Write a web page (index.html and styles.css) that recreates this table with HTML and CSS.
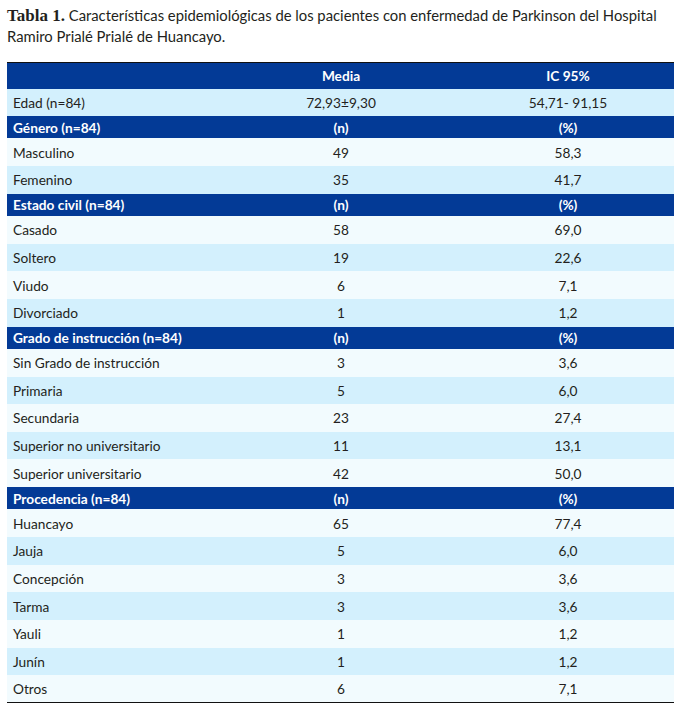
FILE: index.html
```html
<!DOCTYPE html>
<html lang="es">
<head>
<meta charset="utf-8">
<title>Tabla 1</title>
<link rel="stylesheet" href="styles.css">
</head>
<body>
<div class="page">
  <p class="caption"><b class="caption-label">Tabla 1.</b> Características epidemiológicas de los pacientes con enfermedad de Parkinson del Hospital Ramiro Prialé Prialé de Huancayo.</p>
  <table class="data">
    <colgroup>
      <col class="c1"><col class="c2"><col class="c3">
    </colgroup>
    <thead>
      <tr class="head"><th></th><th>Media</th><th>IC 95%</th></tr>
    </thead>
    <tbody>
      <tr class="row alt"><td>Edad (n=84)</td><td>72,93±9,30</td><td>54,71- 91,15</td></tr>
      <tr class="section"><th>Género (n=84)</th><th>(n)</th><th>(%)</th></tr>
      <tr class="row"><td>Masculino</td><td>49</td><td>58,3</td></tr>
      <tr class="row alt"><td>Femenino</td><td>35</td><td>41,7</td></tr>
      <tr class="section"><th>Estado civil (n=84)</th><th>(n)</th><th>(%)</th></tr>
      <tr class="row"><td>Casado</td><td>58</td><td>69,0</td></tr>
      <tr class="row alt"><td>Soltero</td><td>19</td><td>22,6</td></tr>
      <tr class="row"><td>Viudo</td><td>6</td><td>7,1</td></tr>
      <tr class="row alt"><td>Divorciado</td><td>1</td><td>1,2</td></tr>
      <tr class="section"><th>Grado de instrucción (n=84)</th><th>(n)</th><th>(%)</th></tr>
      <tr class="row"><td>Sin Grado de instrucción</td><td>3</td><td>3,6</td></tr>
      <tr class="row alt"><td>Primaria</td><td>5</td><td>6,0</td></tr>
      <tr class="row"><td>Secundaria</td><td>23</td><td>27,4</td></tr>
      <tr class="row alt"><td>Superior no universitario</td><td>11</td><td>13,1</td></tr>
      <tr class="row"><td>Superior universitario</td><td>42</td><td>50,0</td></tr>
      <tr class="section"><th>Procedencia (n=84)</th><th>(n)</th><th>(%)</th></tr>
      <tr class="row"><td>Huancayo</td><td>65</td><td>77,4</td></tr>
      <tr class="row alt"><td>Jauja</td><td>5</td><td>6,0</td></tr>
      <tr class="row"><td>Concepción</td><td>3</td><td>3,6</td></tr>
      <tr class="row alt"><td>Tarma</td><td>3</td><td>3,6</td></tr>
      <tr class="row"><td>Yauli</td><td>1</td><td>1,2</td></tr>
      <tr class="row alt"><td>Junín</td><td>1</td><td>1,2</td></tr>
      <tr class="row"><td>Otros</td><td>6</td><td>7,1</td></tr>
    </tbody>
  </table>
</div>
</body>
</html>
```
FILE: styles.css
```css
html, body {
  margin: 0;
  padding: 0;
  background: #ffffff;
}
.page {
  padding: 5px 5px 0 7px;
  font-family: "Lato", "Open Sans", sans-serif;
  color: #231f20;
}
.caption {
  margin: 0;
  width: 665px;
  font-size: 14.8px;
  line-height: 20px;
  color: #231f20;
}
.caption-label {
  font-family: "Liberation Serif", "Times New Roman", serif;
  font-weight: bold;
  font-size: 17px;
  line-height: 20px;
}
.data {
  margin-top: 16px;
  width: 667px;
  table-layout: fixed;
  border-collapse: collapse;
  border-top: 1.5px solid #111111;
  border-bottom: 1.5px solid #111111;
  font-size: 13.7px;
}
.c1 { width: 213px; }
.c2 { width: 242px; }
.c3 { width: 212px; }
.data th, .data td {
  padding: 0;
  text-align: center;
  white-space: nowrap;
}
.data th:first-child, .data td:first-child {
  text-align: left;
  padding-left: 6px;
}
.head {
  height: 26px;
  background: #033a96;
  color: #ffffff;
}
.section {
  height: 22.3px;
  background: #033a96;
  color: #ffffff;
}
.section th, .head th {
  font-weight: bold;
}
.row {
  height: 27.65px;
  background: #f2fbfe;
}
.row.alt {
  background: #d3f0fd;
}
```
